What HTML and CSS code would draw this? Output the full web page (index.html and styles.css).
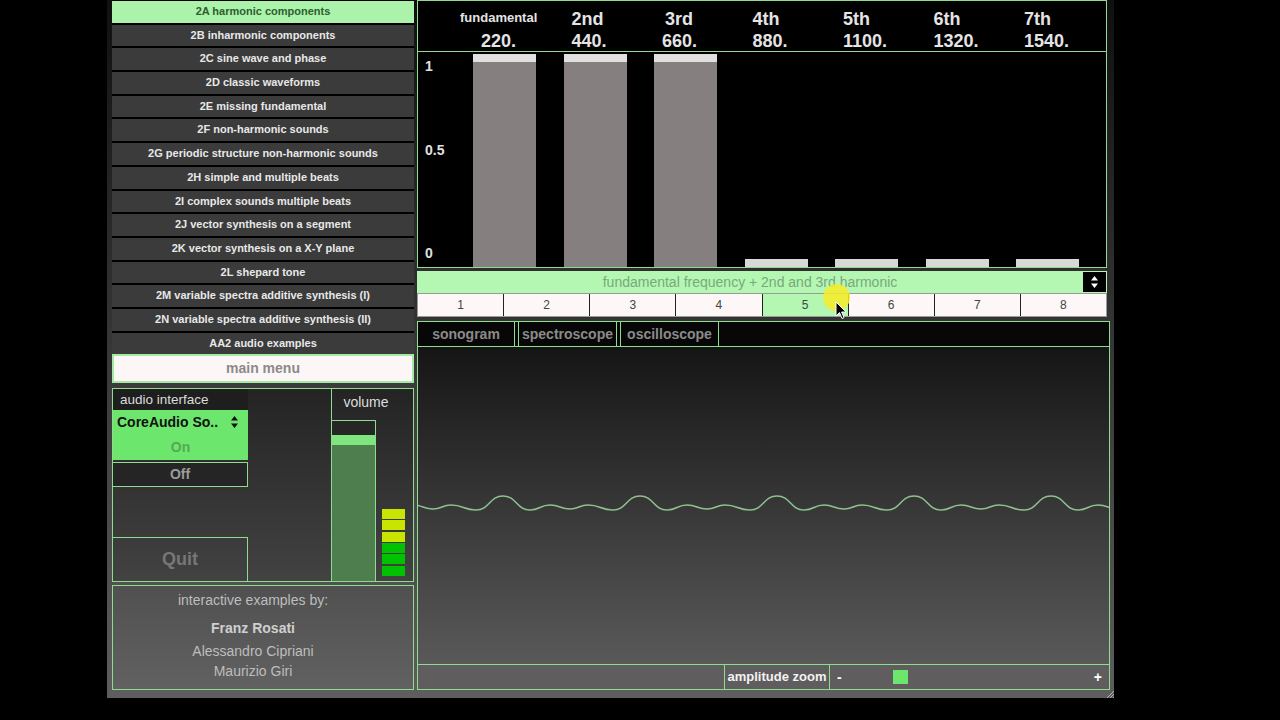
FILE: index.html
```html
<!DOCTYPE html>
<html lang="en">
<head>
    <meta charset="UTF-8">
    <title>Harmonic components</title>
    <link rel="stylesheet" href="styles.css">
</head>
<body>
    <div class="window">
        <div class="left">
            <div class="menu">
                <div class="menu-item active">2A harmonic components</div>
                <div class="menu-item">2B inharmonic components</div>
                <div class="menu-item">2C sine wave and phase</div>
                <div class="menu-item">2D classic waveforms</div>
                <div class="menu-item">2E missing fundamental</div>
                <div class="menu-item">2F non-harmonic sounds</div>
                <div class="menu-item">2G periodic structure non-harmonic sounds</div>
                <div class="menu-item">2H simple and multiple beats</div>
                <div class="menu-item">2I complex sounds multiple beats</div>
                <div class="menu-item">2J vector synthesis on a segment</div>
                <div class="menu-item">2K vector synthesis on a X-Y plane</div>
                <div class="menu-item">2L shepard tone</div>
                <div class="menu-item">2M variable spectra additive synthesis (I)</div>
                <div class="menu-item">2N variable spectra additive synthesis (II)</div>
                <div class="menu-item">AA2 audio examples</div>
            </div>
            <div class="main-menu">main menu</div>

            <div class="controls">
                <div class="audio">
                    <div class="audio-label">audio interface</div>
                    <div class="device">
                        <span>CoreAudio So..</span>
                        <svg width="7" height="12" viewBox="0 0 7 12"><path d="M3.5 0 L7 4.5 L0 4.5 Z M0 7.5 L7 7.5 L3.5 12 Z" fill="#111"/></svg>
                    </div>
                    <div class="on">On</div>
                    <div class="off">Off</div>
                    <div class="quit">Quit</div>
                </div>
                <div class="volume">
                    <div class="vol-label">volume</div>
                    <div class="vol-body">
                        <div class="slider">
                            <div class="slider-empty"></div>
                            <div class="slider-thumb"></div>
                            <div class="slider-fill"></div>
                        </div>
                        <div class="meter">
                            <div class="seg y"></div>
                            <div class="seg y"></div>
                            <div class="seg y"></div>
                            <div class="seg g"></div>
                            <div class="seg g"></div>
                            <div class="seg g"></div>
                        </div>
                    </div>
                </div>
            </div>

            <div class="credits">
                <p class="credits-title">interactive examples by:</p>
                <p class="credits-lead">Franz Rosati</p>
                <p class="credits-name first">Alessandro Cipriani</p>
                <p class="credits-name">Maurizio Giri</p>
            </div>
        </div>

        <div class="right">
            <div class="chart">
                <div class="chart-head">
                    <div class="head-col"><div class="head-name small">fundamental</div><div class="head-freq">220.</div></div>
                    <div class="head-col"><div class="head-name">2nd</div><div class="head-freq">440.</div></div>
                    <div class="head-col"><div class="head-name third">3rd</div><div class="head-freq">660.</div></div>
                    <div class="head-col"><div class="head-name">4th</div><div class="head-freq">880.</div></div>
                    <div class="head-col"><div class="head-name">5th</div><div class="head-freq">1100.</div></div>
                    <div class="head-col"><div class="head-name">6th</div><div class="head-freq">1320.</div></div>
                    <div class="head-col"><div class="head-name">7th</div><div class="head-freq">1540.</div></div>
                </div>
                <div class="plot">
                    <span class="axis axis-1">1</span>
                    <span class="axis axis-half">0.5</span>
                    <span class="axis axis-0">0</span>
                    <div class="bar full"></div>
                    <div class="bar full"></div>
                    <div class="bar full"></div>
                    <div class="bar low"></div>
                    <div class="bar low"></div>
                    <div class="bar low"></div>
                    <div class="bar low"></div>
                </div>
            </div>

            <div class="preset">
                <div class="preset-text">fundamental frequency + 2nd and 3rd harmonic</div>
                <div class="spinner">
                    <svg width="7" height="12" viewBox="0 0 7 12"><path d="M3.5 0 L7 4.5 L0 4.5 Z M0 7.5 L7 7.5 L3.5 12 Z" fill="#fff"/></svg>
                </div>
            </div>

            <div class="numbers">
                <div class="num">1</div>
                <div class="num">2</div>
                <div class="num">3</div>
                <div class="num">4</div>
                <div class="num active">5</div>
                <div class="num">6</div>
                <div class="num">7</div>
                <div class="num">8</div>
            </div>

            <div class="scope-panel">
                <div class="tabs">
                    <div class="tab">sonogram</div>
                    <div class="tab">spectroscope</div>
                    <div class="tab">oscilloscope</div>
                </div>
                <div class="scope">
                    <svg class="wave" viewBox="0 0 691 317" preserveAspectRatio="none">
                        <path fill="none" stroke="#8fc28f" stroke-width="1.5"
                              d="M-5 158 c10 0 10 4 20 4 c9 0 9 -4 18 -4 c12.5 0 12.5 5 25 5 c13.5 0 13.5 -14 27 -14
                                 c13.5 0 13.5 14 27 14 c10 0 10 -5 20 -5 c10 0 10 4 20 4 c9 0 9 -4 18 -4 c12.5 0 12.5 5 25 5 c13.5 0 13.5 -14 27 -14
                                 c13.5 0 13.5 14 27 14 c10 0 10 -5 20 -5 c10 0 10 4 20 4 c9 0 9 -4 18 -4 c12.5 0 12.5 5 25 5 c13.5 0 13.5 -14 27 -14
                                 c13.5 0 13.5 14 27 14 c10 0 10 -5 20 -5 c10 0 10 4 20 4 c9 0 9 -4 18 -4 c12.5 0 12.5 5 25 5 c13.5 0 13.5 -14 27 -14
                                 c13.5 0 13.5 14 27 14 c10 0 10 -5 20 -5 c10 0 10 4 20 4 c9 0 9 -4 18 -4 c12.5 0 12.5 5 25 5 c13.5 0 13.5 -14 27 -14
                                 c13.5 0 13.5 14 27 14 c10 0 10 -5 20 -5 c10 0 10 4 20 4 c9 0 9 -4 18 -4 c12.5 0 12.5 5 25 5 c13.5 0 13.5 -14 27 -14"/>
                    </svg>
                </div>
                <div class="zoom-bar">
                    <div class="zoom-spacer"></div>
                    <div class="zoom-label">amplitude zoom</div>
                    <div class="zoom-slider">
                        <span>-</span>
                        <span class="zoom-knob"></span>
                        <span class="zoom-plus">+</span>
                    </div>
                </div>
            </div>
        </div>

        <svg class="grip" width="8" height="8" viewBox="0 0 8 8">
            <path d="M8 1 L1 8 M8 4 L4 8 M8 7 L7 8" stroke="#b5b5b5" stroke-width="1"/>
        </svg>
    </div>

    <!-- mouse pointer with click highlight -->
    <div class="cursor-spot"></div>
    <svg class="cursor-arrow" width="12" height="19" viewBox="0 0 12 19">
        <path d="M1 1 L1 15 L4.5 11.5 L7 17.5 L9 16.6 L6.6 11 L11 11 Z" fill="#000" stroke="#fff" stroke-width="1"/>
    </svg>
</body>
</html>
```

FILE: styles.css
```css
body {
    margin: 0;
    height: 720px;
    background: #000;
    font-family: "Liberation Sans", Arial, sans-serif;
    overflow: hidden;
    position: relative;
}

.window {
    position: relative;
    margin-left: 107px;
    width: 1007px;
    height: 698px;
    box-sizing: border-box;
    padding: 0 4px 8px 5px;
    display: flex;
    gap: 3px;
    background: linear-gradient(#101010, #5e5e5e);
}

.grip {
    position: absolute;
    right: 0;
    bottom: 0;
}

/* left column */

.left {
    width: 302px;
    display: flex;
    flex-direction: column;
}

.menu {
    padding-top: 1px;
    display: flex;
    flex-direction: column;
    gap: 2px;
    background: #000;
}

.menu-item {
    height: 21.7px;
    line-height: 21.7px;
    background: #3b3b3b;
    color: #e8e8e8;
    font-size: 11px;
    font-weight: bold;
    text-align: center;
}

.menu-item.active {
    background: #abf2ab;
    color: #2e5e2e;
}

.main-menu {
    height: 29px;
    box-sizing: border-box;
    border: 2px solid #a4eaa4;
    background: #fdf6f6;
    color: #8a8a8a;
    font-size: 14px;
    font-weight: bold;
    line-height: 25px;
    text-align: center;
}

.controls {
    margin-top: 4.5px;
    height: 194px;
    box-sizing: border-box;
    border: 1px solid #8fdc8f;
    display: flex;
    background: linear-gradient(#242424, #424242);
}

.audio {
    width: 135px;
    display: flex;
    flex-direction: column;
}

.audio-label {
    height: 21px;
    line-height: 21px;
    padding-left: 7px;
    background: #1e1e1e;
    color: #dcdcdc;
    font-size: 13.5px;
}

.device {
    height: 25px;
    background: #6de66d;
    display: flex;
    align-items: center;
    justify-content: space-between;
    padding: 0 10px 0 4px;
    color: #111;
    font-size: 14px;
    font-weight: bold;
}

.on {
    height: 25px;
    line-height: 25px;
    background: #6de66d;
    color: #55a955;
    font-size: 14px;
    font-weight: bold;
    text-align: center;
}

.off {
    margin-top: 2px;
    height: 25px;
    box-sizing: border-box;
    border: 1px solid #8fdc8f;
    border-left: none;
    background: #252525;
    color: #9c9c9c;
    font-size: 14px;
    font-weight: bold;
    line-height: 23px;
    text-align: center;
}

.quit {
    margin-top: auto;
    height: 43px;
    border-top: 1px solid #8fdc8f;
    border-right: 1px solid #8fdc8f;
    display: flex;
    align-items: center;
    justify-content: center;
    color: #777;
    font-size: 18px;
    font-weight: bold;
}

.volume {
    margin-left: auto;
    width: 81px;
    border-left: 1px solid #8fdc8f;
    display: flex;
    flex-direction: column;
}

.vol-label {
    height: 31px;
    width: 68px;
    line-height: 27px;
    text-align: center;
    color: #dedede;
    font-size: 14px;
}

.vol-body {
    flex: 1;
    display: flex;
    align-items: flex-end;
    gap: 6px;
}

.slider {
    width: 44px;
    height: 100%;
    box-sizing: border-box;
    border-top: 1px solid #8fdc8f;
    border-right: 1px solid #8fdc8f;
    display: flex;
    flex-direction: column;
}

.slider-empty {
    height: 14px;
    background: #262626;
}

.slider-thumb {
    height: 10px;
    background: #7fe57f;
}

.slider-fill {
    flex: 1;
    background: #4e7e4e;
}

.meter {
    width: 23px;
    margin-bottom: 5px;
    display: flex;
    flex-direction: column;
    gap: 1.4px;
}

.seg {
    height: 10px;
}

.seg.y {
    background: #c8e400;
}

.seg.g {
    background: #00c200;
}

.credits {
    margin-top: 3px;
    flex: 1;
    box-sizing: border-box;
    border: 1px solid #8fdc8f;
    background: linear-gradient(#505050, #616161);
    padding: 4px 20px 0 0;
    text-align: center;
    font-size: 14px;
    line-height: 20px;
    color: #bdbdbd;
}

.credits p {
    margin: 0;
}

.credits-lead {
    margin-top: 8px !important;
    font-weight: bold;
    color: #cfcfcf;
}

.credits-name.first {
    margin-top: 3px;
}

/* right column */

.right {
    width: 693px;
    display: flex;
    flex-direction: column;
}

.chart {
    width: 690px;
    height: 268px;
    box-sizing: border-box;
    border: 1px solid #8fdc8f;
    background: #000;
    display: flex;
    flex-direction: column;
}

.chart-head {
    height: 51px;
    box-sizing: border-box;
    border-bottom: 1px solid #8fdc8f;
    display: flex;
    gap: 27.5px;
    padding-left: 55px;
}

.head-col {
    width: 63px;
    padding-left: 8px;
    box-sizing: border-box;
    display: flex;
    flex-direction: column;
    align-items: flex-start;
    color: #e4e4e4;
    font-weight: bold;
    white-space: nowrap;
}

.head-name {
    height: 24px;
    margin-top: 6px;
    display: flex;
    align-items: center;
    font-size: 18px;
}

.head-name.small {
    height: 20px;
    margin-left: -21px;
    margin-bottom: 4px;
    font-size: 13px;
}

.head-name.third {
    margin-left: 3px;
}

.head-freq {
    font-size: 18px;
    line-height: 20px;
}

.plot {
    flex: 1;
    position: relative;
    display: flex;
    align-items: flex-end;
    gap: 27.5px;
    padding-left: 55px;
}

.axis {
    position: absolute;
    left: 7px;
    color: #e0e0e0;
    font-size: 14px;
    font-weight: bold;
    line-height: 16px;
}

.axis-1 { top: 6px; }
.axis-half { top: 90px; }
.axis-0 { top: 193px; }

.bar {
    width: 63px;
}

.bar.full {
    height: 213px;
    box-sizing: border-box;
    border-top: 8px solid #e2dfdf;
    background: #857f7f;
}

.bar.low {
    height: 8px;
    background: #d9d7d7;
}

.preset {
    margin-top: 3px;
    width: 690px;
    height: 22px;
    background: #b3f7b3;
    display: flex;
    align-items: center;
}

.preset-text {
    flex: 1;
    text-align: center;
    color: #7aa87a;
    font-size: 14px;
}

.spinner {
    width: 23px;
    height: 20px;
    margin-right: 1px;
    background: #000;
    display: flex;
    align-items: center;
    justify-content: center;
}

.numbers {
    width: 690px;
    height: 24px;
    box-sizing: border-box;
    border: 1px solid #9a9a9a;
    background: #fdf7f7;
    display: flex;
}

.num {
    flex: 1;
    border-left: 1px solid #222;
    text-align: center;
    line-height: 22px;
    font-size: 12px;
    color: #444;
}

.num:first-child {
    border-left: none;
}

.num.active {
    background: #b3f7b3;
}

.scope-panel {
    margin-top: 4px;
    flex: 1;
    border: 1px solid #8fdc8f;
    display: flex;
    flex-direction: column;
}

.tabs {
    height: 25px;
    box-sizing: border-box;
    border-bottom: 1px solid #8fdc8f;
    background: #070707;
    display: flex;
    gap: 3px;
}

.tab {
    width: 99px;
    box-sizing: border-box;
    border-left: 1px solid #8fdc8f;
    border-right: 1px solid #8fdc8f;
    color: #8b8b8b;
    font-size: 14px;
    font-weight: bold;
    line-height: 24px;
    text-align: center;
}

.tab:first-child {
    width: 97px;
    border-left: none;
}

.scope {
    flex: 1;
    position: relative;
    background: linear-gradient(#151515, #595959);
}

.wave {
    position: absolute;
    left: 0;
    top: 0;
    width: 100%;
    height: 100%;
}

.zoom-bar {
    height: 25px;
    box-sizing: border-box;
    border-top: 1px solid #8fdc8f;
    background: #5f5d5d;
    display: flex;
}

.zoom-spacer {
    width: 306px;
}

.zoom-label {
    width: 106px;
    box-sizing: border-box;
    border-left: 1px solid #8fdc8f;
    border-right: 1px solid #8fdc8f;
    color: #f2f2f2;
    font-size: 13px;
    font-weight: bold;
    line-height: 24px;
    text-align: center;
}

.zoom-slider {
    flex: 1;
    display: flex;
    align-items: center;
    padding: 0 7px 0 7px;
    color: #fff;
    font-size: 14px;
    font-weight: bold;
}

.zoom-knob {
    width: 15px;
    height: 14px;
    margin-left: 51px;
    background: #6de66d;
}

.zoom-plus {
    margin-left: auto;
}

/* pointer overlay */

.cursor-spot {
    position: absolute;
    left: 823px;
    top: 284px;
    width: 27px;
    height: 27px;
    border-radius: 50%;
    background: rgba(248, 236, 40, 0.85);
}

.cursor-arrow {
    position: absolute;
    left: 835px;
    top: 301px;
}
```
